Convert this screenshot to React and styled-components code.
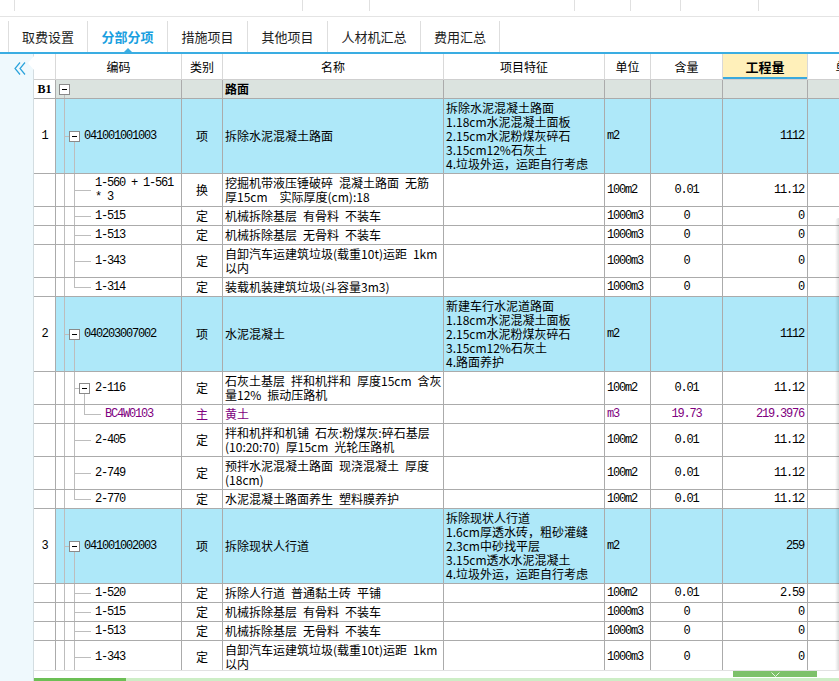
import React from "react";
import styled, { createGlobalStyle } from "styled-components";

const GlobalStyle = createGlobalStyle`
  *, *::before, *::after {
    box-sizing: border-box;
  }
  html, body {
    margin: 0;
    padding: 0;
    background: #ffffff;
  }
  body {
    font-family: "Noto Sans CJK SC", "Noto Sans", sans-serif;
    font-size: 12px;
    color: #000;
    overflow: hidden;
  }
`;

const COLUMNS = "22px 126px 41px 221px 161px 46px 72px 85px 80px";
const BLUE_ROW = "#aee8f9";
const SECTION_ROW = "#dbe3df";
const GRID_LINE = "#ababab";
const HEAD_LINE = "#d9d9d9";
const TREE_LINE = "#bdbdbd";
const PURPLE = "#800080";
const MONO = `"Liberation Mono", "DejaVu Sans Mono", monospace`;

const Page = styled.div`
  display: flex;
  flex-direction: column;
  width: 839px;
  height: 681px;
  overflow: hidden;
  background: #fff;
`;

const TopStrip = styled.div`
  display: flex;
  flex-shrink: 0;
  height: 17px;
  border-bottom: 1px solid #e4e4e4;
`;

const StripPart = styled.div`
  flex-shrink: 0;
  width: ${(p) => p.$w}px;
  height: 11px;
  border-left: ${(p) => (p.$edge ? "1px solid #e0e0e0" : "none")};
`;

const TabBar = styled.div`
  display: flex;
  flex-shrink: 0;
  height: 33px;
  margin-top: 4px;
  padding-left: 8px;
  border-bottom: 2px solid #3aade2;
`;

const Tab = styled.div`
  position: relative;
  display: flex;
  align-items: center;
  justify-content: center;
  width: ${(p) => p.$w}px;
  border-left: 1px solid #dedede;
  border-right: ${(p) => (p.$last ? "1px solid #dedede" : "none")};
  font-size: 13px;
  font-weight: ${(p) => (p.$active ? 700 : 400)};
  color: ${(p) => (p.$active ? "#1a9fe0" : "#1e1e1e")};

  ${(p) =>
    p.$active &&
    `
    &::after {
      content: "";
      position: absolute;
      left: 50%;
      bottom: 0;
      margin-left: -4px;
      border-left: 4px solid transparent;
      border-right: 4px solid transparent;
      border-bottom: 4px solid #3aade2;
    }
  `}
`;

const Main = styled.div`
  display: flex;
  flex: 1;
  min-height: 0;
`;

const SidePanel = styled.div`
  position: relative;
  flex-shrink: 0;
  width: 34px;
  padding: 7px 0 0 14px;
  background: #eff9fd;
  border-right: 1px solid #d3dde1;
`;

const PanelNotch = styled.div`
  position: absolute;
  top: 2px;
  right: -1px;
  width: 0;
  height: 0;
  border-top: 7px solid transparent;
  border-bottom: 7px solid transparent;
  border-right: 6px solid #ffffff;
`;

const Workspace = styled.div`
  display: flex;
  flex-direction: column;
  flex: 1;
  min-width: 0;
`;

const Sheet = styled.div`
  position: relative;
  flex-shrink: 0;
  height: 616px;
  overflow: hidden;
`;

// faint edge of the collapsed vertical scroller
const ScrollEdge = styled.div`
  position: absolute;
  top: 164px;
  right: 0;
  bottom: 0;
  width: 4px;
  border-top-left-radius: 4px;
  background: linear-gradient(to right, rgba(0, 0, 0, 0), rgba(0, 0, 0, 0.14));
`;

const HeaderRow = styled.div`
  display: grid;
  grid-template-columns: ${COLUMNS};
  height: 26px;
  background: #fff;
`;

const HeadCell = styled.div`
  display: flex;
  align-items: center;
  justify-content: center;
  border-right: 1px solid ${HEAD_LINE};
  border-bottom: 1px solid #cfcfcf;
  font-size: ${(p) => (p.$hot ? "13px" : "12px")};
  font-weight: ${(p) => (p.$hot ? 700 : 400)};
  background: ${(p) => (p.$hot ? "#fff0ba" : "#fff")};
  box-shadow: ${(p) => (p.$hot ? "inset 0 -2px 0 #3aa9dd" : "none")};
  white-space: nowrap;
  overflow: hidden;
`;

const Row = styled.div`
  display: grid;
  grid-template-columns: ${COLUMNS};
  height: ${(p) => p.$h}px;
  background: ${(p) => p.$bg};
  color: ${(p) => (p.$material ? PURPLE : "#000")};
`;

const Cell = styled.div`
  display: flex;
  align-items: center;
  min-width: 0;
  overflow: hidden;
  border-right: 1px solid ${GRID_LINE};
  border-bottom: 1px solid ${GRID_LINE};
  line-height: 14px;
  white-space: pre;
`;

const NumberCell = styled(Cell)`
  justify-content: center;
  background: #fff;
  font-family: ${(p) => (p.$section ? `"Liberation Serif", serif` : MONO)};
  font-weight: ${(p) => (p.$section ? 700 : 400)};
  letter-spacing: ${(p) => (p.$section ? "0" : "-1.2px")};
`;

const CodeCell = styled(Cell)`
  align-items: stretch;
`;

const CodeText = styled.span`
  align-self: center;
  font-family: ${MONO};
  letter-spacing: -1.2px;
`;

const TypeCell = styled(Cell)`
  justify-content: center;
`;

const NameCell = styled(Cell)`
  padding-left: 2px;
  font-weight: ${(p) => (p.$section ? 700 : 400)};
`;

const FeatureCell = styled(Cell)`
  padding: 0 2px;
`;

const UnitCell = styled(Cell)`
  padding-left: 2px;
  font-family: ${MONO};
  letter-spacing: -1.2px;
`;

const ContentCell = styled(Cell)`
  justify-content: center;
  font-family: ${MONO};
  letter-spacing: -1.2px;
`;

const QtyCell = styled(Cell)`
  justify-content: flex-end;
  padding-right: 3px;
  font-family: ${MONO};
  letter-spacing: -1.2px;
`;

const SheetFooter = styled.div`
  display: flex;
  flex-direction: column;
  flex-shrink: 0;
  height: 11px;
  border-top: 1px solid #e2e2e2;
`;

const FooterBody = styled.div`
  display: flex;
  justify-content: flex-end;
  flex: 1;
  padding-right: 22px;
`;

const ScrollHandle = styled.div`
  display: flex;
  align-items: center;
  justify-content: center;
  width: 84px;
  height: 6px;
  background: #7dc16a;
`;

const BottomTabs = styled.div`
  display: flex;
  height: 3px;
  background: #cdeec6;
`;

const BottomTabActive = styled.div`
  width: 92px;
  background: #6cbf55;
`;

const sp = (s) => s.replace(/ /g, "\u2002");

const rows = [
  { no: "B1", level: 0, section: true, name: "路面", h: 19 },
  {
    no: "1",
    level: 1,
    code: "041001001003",
    type: "项",
    name: "拆除水泥混凝土路面",
    feature:
      "拆除水泥混凝土路面\n1.18cm水泥混凝土面板\n2.15cm水泥粉煤灰碎石\n3.15cm12%石灰土\n4.垃圾外运，运距自行考虑",
    unit: "m2",
    qty: "1112",
    h: 75,
  },
  {
    level: 2,
    code: "1-560 + 1-561\n* 3",
    type: "换",
    name: "挖掘机带液压锤破碎 混凝土路面 无筋\n厚15cm  实际厚度(cm):18",
    unit: "100m2",
    content: "0.01",
    qty: "11.12",
    h: 33,
  },
  { level: 2, code: "1-515", type: "定", name: "机械拆除基层 有骨料 不装车", unit: "1000m3", content: "0", qty: "0", h: 19 },
  { level: 2, code: "1-513", type: "定", name: "机械拆除基层 无骨料 不装车", unit: "1000m3", content: "0", qty: "0", h: 19 },
  { level: 2, code: "1-343", type: "定", name: "自卸汽车运建筑垃圾(载重10t)运距 1km\n以内", unit: "1000m3", content: "0", qty: "0", h: 33 },
  { level: 2, code: "1-314", type: "定", name: "装载机装建筑垃圾(斗容量3m3)", unit: "1000m3", content: "0", qty: "0", h: 19 },
  {
    no: "2",
    level: 1,
    code: "040203007002",
    type: "项",
    name: "水泥混凝土",
    feature:
      "新建车行水泥道路面\n1.18cm水泥混凝土面板\n2.15cm水泥粉煤灰碎石\n3.15cm12%石灰土\n4.路面养护",
    unit: "m2",
    qty: "1112",
    h: 75,
  },
  {
    level: 2,
    box: true,
    code: "2-116",
    type: "定",
    name: "石灰土基层 拌和机拌和 厚度15cm 含灰\n量12% 振动压路机",
    unit: "100m2",
    content: "0.01",
    qty: "11.12",
    h: 33,
  },
  { level: 3, material: true, code: "BC4W0103", type: "主", name: "黄土", unit: "m3", content: "19.73", qty: "219.3976", h: 19 },
  {
    level: 2,
    code: "2-405",
    type: "定",
    name: "拌和机拌和机铺 石灰:粉煤灰:碎石基层\n(10:20:70) 厚15cm 光轮压路机",
    unit: "100m2",
    content: "0.01",
    qty: "11.12",
    h: 33,
  },
  {
    level: 2,
    code: "2-749",
    type: "定",
    name: "预拌水泥混凝土路面 现浇混凝土 厚度\n(18cm)",
    unit: "100m2",
    content: "0.01",
    qty: "11.12",
    h: 33,
  },
  { level: 2, code: "2-770", type: "定", name: "水泥混凝土路面养生 塑料膜养护", unit: "100m2", content: "0.01", qty: "11.12", h: 19 },
  {
    no: "3",
    level: 1,
    code: "041001002003",
    type: "项",
    name: "拆除现状人行道",
    feature:
      "拆除现状人行道\n1.6cm厚透水砖，粗砂灌缝\n2.3cm中砂找平层\n3.15cm透水水泥混凝土\n4.垃圾外运，运距自行考虑",
    unit: "m2",
    qty: "259",
    h: 75,
  },
  { level: 2, code: "1-520", type: "定", name: "拆除人行道 普通黏土砖 平铺", unit: "100m2", content: "0.01", qty: "2.59", h: 19 },
  { level: 2, code: "1-515", type: "定", name: "机械拆除基层 有骨料 不装车", unit: "1000m3", content: "0", qty: "0", h: 19 },
  { level: 2, code: "1-513", type: "定", name: "机械拆除基层 无骨料 不装车", unit: "1000m3", content: "0", qty: "0", h: 19 },
  { level: 2, code: "1-343", type: "定", name: "自卸汽车运建筑垃圾(载重10t)运距 1km\n以内", unit: "1000m3", content: "0", qty: "0", h: 33 },
];

const tabs = [
  { label: "取费设置", w: 79 },
  { label: "分部分项", w: 80, active: true },
  { label: "措施项目", w: 80 },
  { label: "其他项目", w: 80 },
  { label: "人材机汇总", w: 93 },
  { label: "费用汇总", w: 80 },
];

const headers = ["", "编码", "类别", "名称", "项目特征", "单位", "含量", "工程量", "单价"];

const rail = (k) => 8 + 10 * k;

// does the branch hanging from level k go on below row i
function continues(i, k) {
  for (let j = i + 1; j < rows.length; j++) {
    if (rows[j].level <= k) return false;
    if (rows[j].level === k + 1) return true;
  }
  return true;
}

function TreeGlyph({ row, index }) {
  const inner = row.h - 1;
  const cy = Math.floor(inner / 2) + 0.5;
  const L = row.level;
  const hasBox = L <= 1 || row.box;
  const lines = [];

  for (let k = 0; k < L; k++) {
    const x = rail(k) + 0.5;
    const more = continues(index, k);
    if (k < L - 1) {
      if (more) lines.push([x, 0, x, inner]);
    } else {
      lines.push([x, 0, x, more ? inner : cy]);
    }
  }
  if (L >= 1) {
    const x0 = rail(L - 1);
    const x1 = hasBox ? rail(L) - 5 : x0 + 17;
    lines.push([x0, cy, x1, cy]);
  }
  if (hasBox) lines.push([rail(L) + 0.5, cy + 5.5, rail(L) + 0.5, inner]);

  const width = hasBox ? rail(L) + (L > 1 ? 11 : 10) : rail(L - 1) + 21;

  return (
    <svg width={width} height={inner} style={{ flexShrink: 0, display: "block" }} shapeRendering="crispEdges">
      {lines.map(([x1, y1, x2, y2], n) => (
        <line key={n} x1={x1} y1={y1} x2={x2} y2={y2} stroke={TREE_LINE} strokeWidth="1" />
      ))}
      {hasBox && (
        <g>
          <rect x={rail(L) - 4.5} y={cy - 5} width="10" height="10" fill="#fff" stroke="#8a8a8a" />
          <line x1={rail(L) - 2} y1={cy} x2={rail(L) + 3} y2={cy} stroke="#000" />
        </g>
      )}
    </svg>
  );
}

function SheetRow({ row, index }) {
  const bg = row.section ? SECTION_ROW : row.level === 1 ? BLUE_ROW : "#fff";
  return (
    <Row $h={row.h} $bg={bg} $material={row.material}>
      <NumberCell $section={row.section}>{row.no}</NumberCell>
      <CodeCell>
        <TreeGlyph row={row} index={index} />
        {row.code && <CodeText>{row.code}</CodeText>}
      </CodeCell>
      <TypeCell>{row.type}</TypeCell>
      <NameCell $section={row.section}>{sp(row.name)}</NameCell>
      <FeatureCell>{row.feature}</FeatureCell>
      <UnitCell>{row.unit}</UnitCell>
      <ContentCell>{row.content}</ContentCell>
      <QtyCell>{row.qty}</QtyCell>
      <Cell />
    </Row>
  );
}

export default function App() {
  return (
    <Page>
      <GlobalStyle />
      <TopStrip>
        <StripPart $w={14} />
        <StripPart $w={288} $edge />
        <StripPart $w={67} $edge />
        <StripPart $w={205} $edge />
        <StripPart $w={56} $edge />
        <StripPart $w={50} $edge />
        <StripPart $w={78} $edge />
        <StripPart $w={81} $edge />
      </TopStrip>
      <TabBar>
        {tabs.map((t, i) => (
          <Tab key={t.label} $w={t.w} $active={t.active} $last={i === tabs.length - 1}>
            {t.label}
          </Tab>
        ))}
      </TabBar>
      <Main>
        <SidePanel>
          <PanelNotch />
          <svg width="12" height="13" viewBox="0 0 12 13">
            <polyline points="6,0.5 1,6.5 6,12.5" fill="none" stroke="#2aa3dc" strokeWidth="1.2" />
            <polyline points="11,0.5 6,6.5 11,12.5" fill="none" stroke="#2aa3dc" strokeWidth="1.2" />
          </svg>
        </SidePanel>
        <Workspace>
          <Sheet>
            <HeaderRow>
              {headers.map((h, i) => (
                <HeadCell key={i} $hot={h === "工程量"}>
                  {h}
                </HeadCell>
              ))}
            </HeaderRow>
            {rows.map((row, i) => (
              <SheetRow key={i} row={row} index={i} />
            ))}
            <ScrollEdge />
          </Sheet>
          <SheetFooter>
            <FooterBody>
              <ScrollHandle>
                <svg width="9" height="5" viewBox="0 0 9 5">
                  <polyline points="0.5,0.5 4.5,4.5 8.5,0.5" fill="none" stroke="#e8f6e2" strokeWidth="1" />
                </svg>
              </ScrollHandle>
            </FooterBody>
            <BottomTabs>
              <BottomTabActive />
            </BottomTabs>
          </SheetFooter>
        </Workspace>
      </Main>
    </Page>
  );
}
